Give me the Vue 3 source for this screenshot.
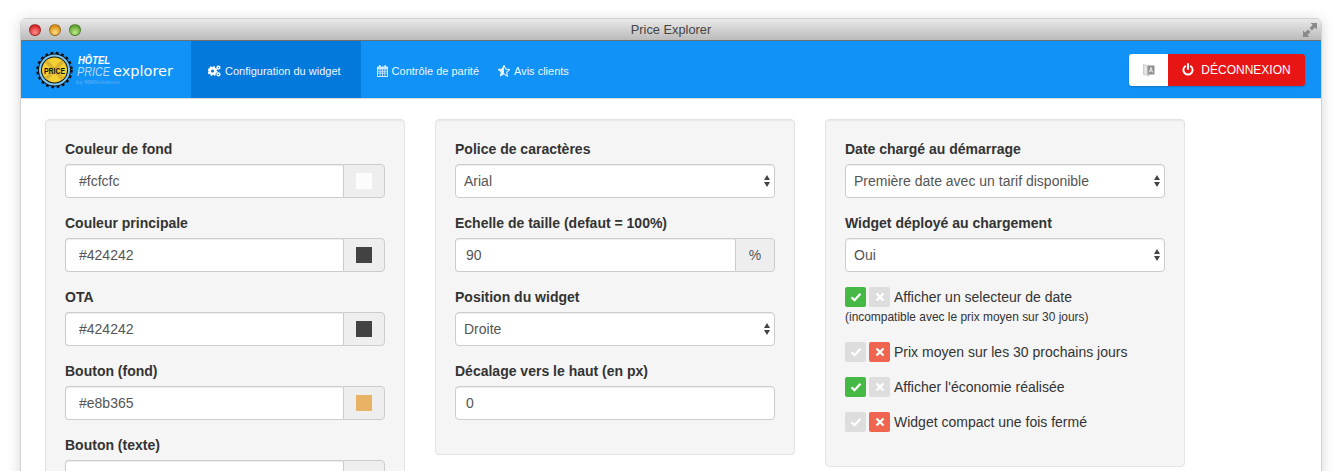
<script setup>
const col1 = [
  { label: 'Couleur de fond', value: '#fcfcfc', color: '#fcfcfc' },
  { label: 'Couleur principale', value: '#424242', color: '#424242' },
  { label: 'OTA', value: '#424242', color: '#424242' },
  { label: 'Bouton (fond)', value: '#e8b365', color: '#e8b365' },
  { label: 'Bouton (texte)', value: '#eeeeee', color: '#eeeeee' },
]
const toggles = [
  { label: 'Prix moyen sur les 30 prochains jours', on: false },
  { label: "Afficher l'économie réalisée", on: true },
  { label: 'Widget compact une fois fermé', on: false },
]
</script>

<template>
  <div class="page">
    <div class="window">
      <header class="titlebar">
        <div class="lights">
          <span class="light red"></span>
          <span class="light yellow"></span>
          <span class="light green"></span>
        </div>
        <span class="title">Price Explorer</span>
        <svg class="resize" viewBox="0 0 14 14" width="14" height="14">
          <path d="M7.500 0H14v6.500l-2.100-2.100-3 3-2.300-2.300 3-3zM0 7.500l2.100 2.100 3-3 2.300 2.300-3 3L6.500 14H0z" fill="#8a8a8a" />
        </svg>
      </header>

      <nav class="navbar">
        <div class="brand">
          <svg width="170" height="50" viewBox="0 0 170 50">
            <circle cx="33.500" cy="25" r="16.500" fill="#111" />
            <circle cx="33.500" cy="25" r="17" fill="none" stroke="#111" stroke-width="2.500" stroke-dasharray="2.700 2.700" />
            <circle cx="33.500" cy="25" r="15.500" fill="#7cc6f4" />
            <circle cx="33.500" cy="25" r="13.500" fill="#111" />
            <circle cx="33.500" cy="25" r="12.500" fill="#f5d033" />
            <path d="M25 16l17 18M42 16L25 34" stroke="#d9b431" stroke-width="4" />
            <text x="33.500" y="28.500" text-anchor="middle" textLength="21" lengthAdjust="spacingAndGlyphs" class="logo-price">PRICE</text>
            <text x="57" y="18.500" textLength="32" lengthAdjust="spacingAndGlyphs" class="logo-hotel">HÔTEL</text>
            <text x="56" y="31" textLength="33" lengthAdjust="spacingAndGlyphs" class="logo-thin">PRICE</text>
            <text x="92" y="31" textLength="60" lengthAdjust="spacingAndGlyphs" class="logo-explorer">explorer</text>
            <text x="55" y="39" textLength="44" lengthAdjust="spacingAndGlyphs" class="logo-by">by MMSolutions</text>
          </svg>
        </div>
        <a class="item active">
          <svg width="13" height="12" viewBox="0 0 13 12">
            <g fill="none" stroke="#fff">
              <circle cx="4.500" cy="6" r="2.800" stroke-width="2.600" />
              <circle cx="4.500" cy="6" r="4.300" stroke-width="1.400" stroke-dasharray="1.700 1.700" />
              <circle cx="10.500" cy="2.600" r="1.400" stroke-width="1.400" />
              <circle cx="10.500" cy="9.400" r="1.400" stroke-width="1.400" />
            </g>
          </svg>
          Configuration du widget
        </a>
        <a class="item first-plain">
          <svg width="11" height="12" viewBox="0 0 11 12">
            <path d="M2 0h1.500v1.500h4V0H9v1.500h2V12H0V1.500h2zM1 4.500v6.500h9V4.500z" fill="#cfe8fd" />
            <path d="M1 6.300h9M1 8.200h9M3.200 4.500V11M5.500 4.500V11M7.800 4.500V11" stroke="#cfe8fd" stroke-width=".8" />
          </svg>
          Contrôle de parité
        </a>
        <a class="item">
          <svg width="12" height="12" viewBox="0 0 12 12">
            <path d="M6 .5l1.700 3.600 3.800.5-2.800 2.700.7 3.900L6 8.800l-3.400 1.900.7-3.900L.5 4.600l3.800-.5z" fill="none" stroke="#e4f2fe" stroke-width="1.100" />
            <path d="M6 .5v8.300l-3.400 1.900.7-3.900L.5 4.600l3.800-.5z" fill="#e4f2fe" />
          </svg>
          Avis clients
        </a>
        <div class="actions">
          <button class="lang" aria-label="Langue">
            <svg width="12" height="14" viewBox="0 0 12 14">
              <path d="M.5 1.500L6 3v10L.5 11.500z" fill="#e3e3e3" stroke="#bdbdbd" stroke-width=".7" />
              <path d="M4.500 2.500H11.500V11.500H4.500z" fill="#8f8f8f" />
              <path d="M8 4.500L6.300 9.500M8 4.500l1.700 5M7 8h2" stroke="#fff" stroke-width=".8" fill="none" />
            </svg>
          </button>
          <button class="logout">
            <svg width="12" height="13" viewBox="0 0 12 13">
              <path d="M3.300 3.200a4.600 4.600 0 1 0 5.400 0" fill="none" stroke="#fff" stroke-width="1.900" stroke-linecap="round" />
              <path d="M6 1v5" stroke="#fff" stroke-width="1.900" stroke-linecap="round" />
            </svg>
            DÉCONNEXION
          </button>
        </div>
      </nav>

      <main class="content">
        <section class="panel">
          <div v-for="f in col1" :key="f.label" class="group">
            <label>{{ f.label }}</label>
            <div class="input-group">
              <input class="control color-input" :value="f.value" />
              <span class="addon wide"><i class="swatch" :style="{ background: f.color }"></i></span>
            </div>
          </div>
        </section>

        <section class="panel">
          <div class="group">
            <label>Police de caractères</label>
            <select class="control"><option>Arial</option></select>
          </div>
          <div class="group">
            <label>Echelle de taille (defaut = 100%)</label>
            <div class="input-group">
              <input class="control num" value="90" />
              <span class="addon">%</span>
            </div>
          </div>
          <div class="group">
            <label>Position du widget</label>
            <select class="control"><option>Droite</option></select>
          </div>
          <div class="group">
            <label>Décalage vers le haut (en px)</label>
            <input class="control num" value="0" />
          </div>
        </section>

        <section class="panel">
          <div class="group">
            <label>Date chargé au démarrage</label>
            <select class="control"><option>Première date avec un tarif disponible</option></select>
          </div>
          <div class="group">
            <label>Widget déployé au chargement</label>
            <select class="control"><option>Oui</option></select>
          </div>
          <div class="group">
            <div class="toggle">
              <span class="tbtn yes">
                <svg width="12" height="10" viewBox="0 0 12 10"><path d="M1.500 5.200l3 3 6-6.400" fill="none" stroke="#fff" stroke-width="2.300" /></svg>
              </span>
              <span class="tbtn">
                <svg width="10" height="10" viewBox="0 0 10 10"><path d="M1.500 1.500l7 7M8.500 1.500l-7 7" fill="none" stroke="#fff" stroke-width="2.300" /></svg>
              </span>
              <span class="tlabel">Afficher un selecteur de date</span>
            </div>
            <small>(incompatible avec le prix moyen sur 30 jours)</small>
          </div>
          <div v-for="t in toggles" :key="t.label" class="group toggle">
            <span class="tbtn" :class="{ yes: t.on }">
              <svg width="12" height="10" viewBox="0 0 12 10"><path d="M1.500 5.200l3 3 6-6.400" fill="none" stroke="#fff" stroke-width="2.300" /></svg>
            </span>
            <span class="tbtn" :class="{ no: !t.on }">
              <svg width="10" height="10" viewBox="0 0 10 10"><path d="M1.500 1.500l7 7M8.500 1.500l-7 7" fill="none" stroke="#fff" stroke-width="2.300" /></svg>
            </span>
            <span class="tlabel">{{ t.label }}</span>
          </div>
        </section>
      </main>
    </div>
  </div>
</template>

<style>
html, body { margin: 0; background: #fff; overflow: hidden; }
</style>

<style scoped>
* { box-sizing: border-box; }
.page {
  height: 471px;
  overflow: hidden;
  padding: 18px 20px 0;
  font-family: "Liberation Sans", Arial, sans-serif;
  font-size: 14px;
  color: #333;
}
.window {
  height: 600px;
  border: 1px solid #d2d2d2;
  border-radius: 6px 6px 0 0;
  background: #fff;
  box-shadow: 0 2px 14px rgba(0, 0, 0, .16);
  overflow: hidden;
}
.titlebar {
  position: relative;
  height: 22px;
  display: flex;
  align-items: center;
  justify-content: center;
  background: linear-gradient(#e9e9e9, #bbbbbb);
  border-bottom: 1px solid #6f6f6f;
}
.lights {
  position: absolute;
  left: 8px;
  top: 5px;
  display: flex;
  gap: 8px;
}
.light { width: 12px; height: 12px; border-radius: 50%; border: 1px solid rgba(0, 0, 0, .3); }
.red { background: radial-gradient(circle at 50% 75%, #ff8e86, #d8262a 75%); }
.yellow { background: radial-gradient(circle at 50% 75%, #ffdc80, #d98d14 75%); }
.green { background: radial-gradient(circle at 50% 75%, #c0ea8c, #5da52e 75%); }
.title { font-size: 12.800px; color: #444; }
.resize { position: absolute; right: 4px; top: 4px; }
.navbar {
  height: 58px;
  display: flex;
  align-items: stretch;
  background: #1092f6;
  border-bottom: 1px solid #d9d9d9;
  color: #fff;
  font-size: 11px;
}
.brand { width: 170px; display: flex; align-items: center; flex: none; }
.logo-price { font: bold 9px "Liberation Sans", sans-serif; fill: #111; }
.logo-hotel { font: italic bold 10px "Liberation Sans", sans-serif; fill: #fff; }
.logo-thin { font: italic 13px "Liberation Sans", sans-serif; fill: #b5dcfb; }
.logo-explorer { font: 14px "DejaVu Sans", sans-serif; fill: #fff; }
.logo-by { font: bold 6px "Liberation Sans", sans-serif; fill: #4aa9f7; }
.item {
  display: flex;
  align-items: center;
  gap: 4px;
  padding: 2px 9px 0;
  white-space: nowrap;
  color: #eef7ff;
}
.item.active { padding: 2px 20px 0 17px; background: #0379dc; }
.first-plain { margin-left: 7px; padding-right: 10px; }
.actions {
  margin-left: auto;
  margin-right: 16px;
  align-self: center;
  display: flex;
  height: 32px;
  border-radius: 3px;
  overflow: hidden;
  box-shadow: 0 1px 2px rgba(0, 0, 0, .2);
}
.actions button { border: 0; padding: 0; font: inherit; display: flex; align-items: center; justify-content: center; }
.lang { width: 39px; background: #fff; }
.logout { width: 137px; gap: 7px; background: #e81515; color: #fff; font-size: 12px !important; }
.content {
  display: flex;
  align-items: flex-start;
  gap: 30px;
  padding: 20px 24px 0;
}
.panel {
  width: 360px;
  flex: none;
  padding: 19px;
  background: #f5f5f5;
  border: 1px solid #e3e3e3;
  border-radius: 4px;
  box-shadow: inset 0 1px 1px rgba(0, 0, 0, .05);
}
.group { margin-bottom: 15px; }
label {
  display: block;
  height: 20px;
  line-height: 20px;
  margin-bottom: 5px;
  font-weight: bold;
}
.input-group { display: flex; }
.control {
  display: block;
  width: 100%;
  min-width: 0;
  height: 34px;
  padding: 6px 12px;
  border: 1px solid #ccc;
  border-radius: 4px;
  background: #fff;
  color: #555;
  font: 14px "Liberation Sans", Arial, sans-serif;
  box-shadow: inset 0 1px 1px rgba(0, 0, 0, .075);
  outline: none;
}
.color-input { padding-left: 13px; }
.num { padding-left: 10px; }
select.control {
  appearance: none;
  -webkit-appearance: none;
  padding: 6px 8px;
  background-image: url("data:image/svg+xml;utf8,<svg xmlns='http://www.w3.org/2000/svg' width='6' height='12'><path d='M3 0l3 5H0zM3 12L0 7h6z' fill='%23444'/></svg>");
  background-repeat: no-repeat;
  background-position: right 4px center;
}
.input-group .control { border-radius: 4px 0 0 4px; border-right: 0; flex: 1; }
.addon {
  flex: none;
  width: 40px;
  height: 34px;
  display: flex;
  align-items: center;
  justify-content: center;
  background: #eee;
  border: 1px solid #ccc;
  border-radius: 0 4px 4px 0;
  color: #555;
}
.addon.wide { width: 42px; }
.swatch { width: 16px; height: 16px; display: block; }
.toggle { display: flex; align-items: center; height: 20px; }
.tbtn {
  flex: none;
  width: 21px;
  height: 20px;
  margin-right: 3px;
  border-radius: 2px;
  background: #ddd;
  display: flex;
  align-items: center;
  justify-content: center;
}
.tbtn.yes { background: #46b846; }
.tbtn.no { background: #f0654f; }
.tlabel { margin-left: 1px; white-space: nowrap; }
small { display: block; height: 20px; line-height: 20px; font-size: 11.950px; white-space: nowrap; }
</style>
